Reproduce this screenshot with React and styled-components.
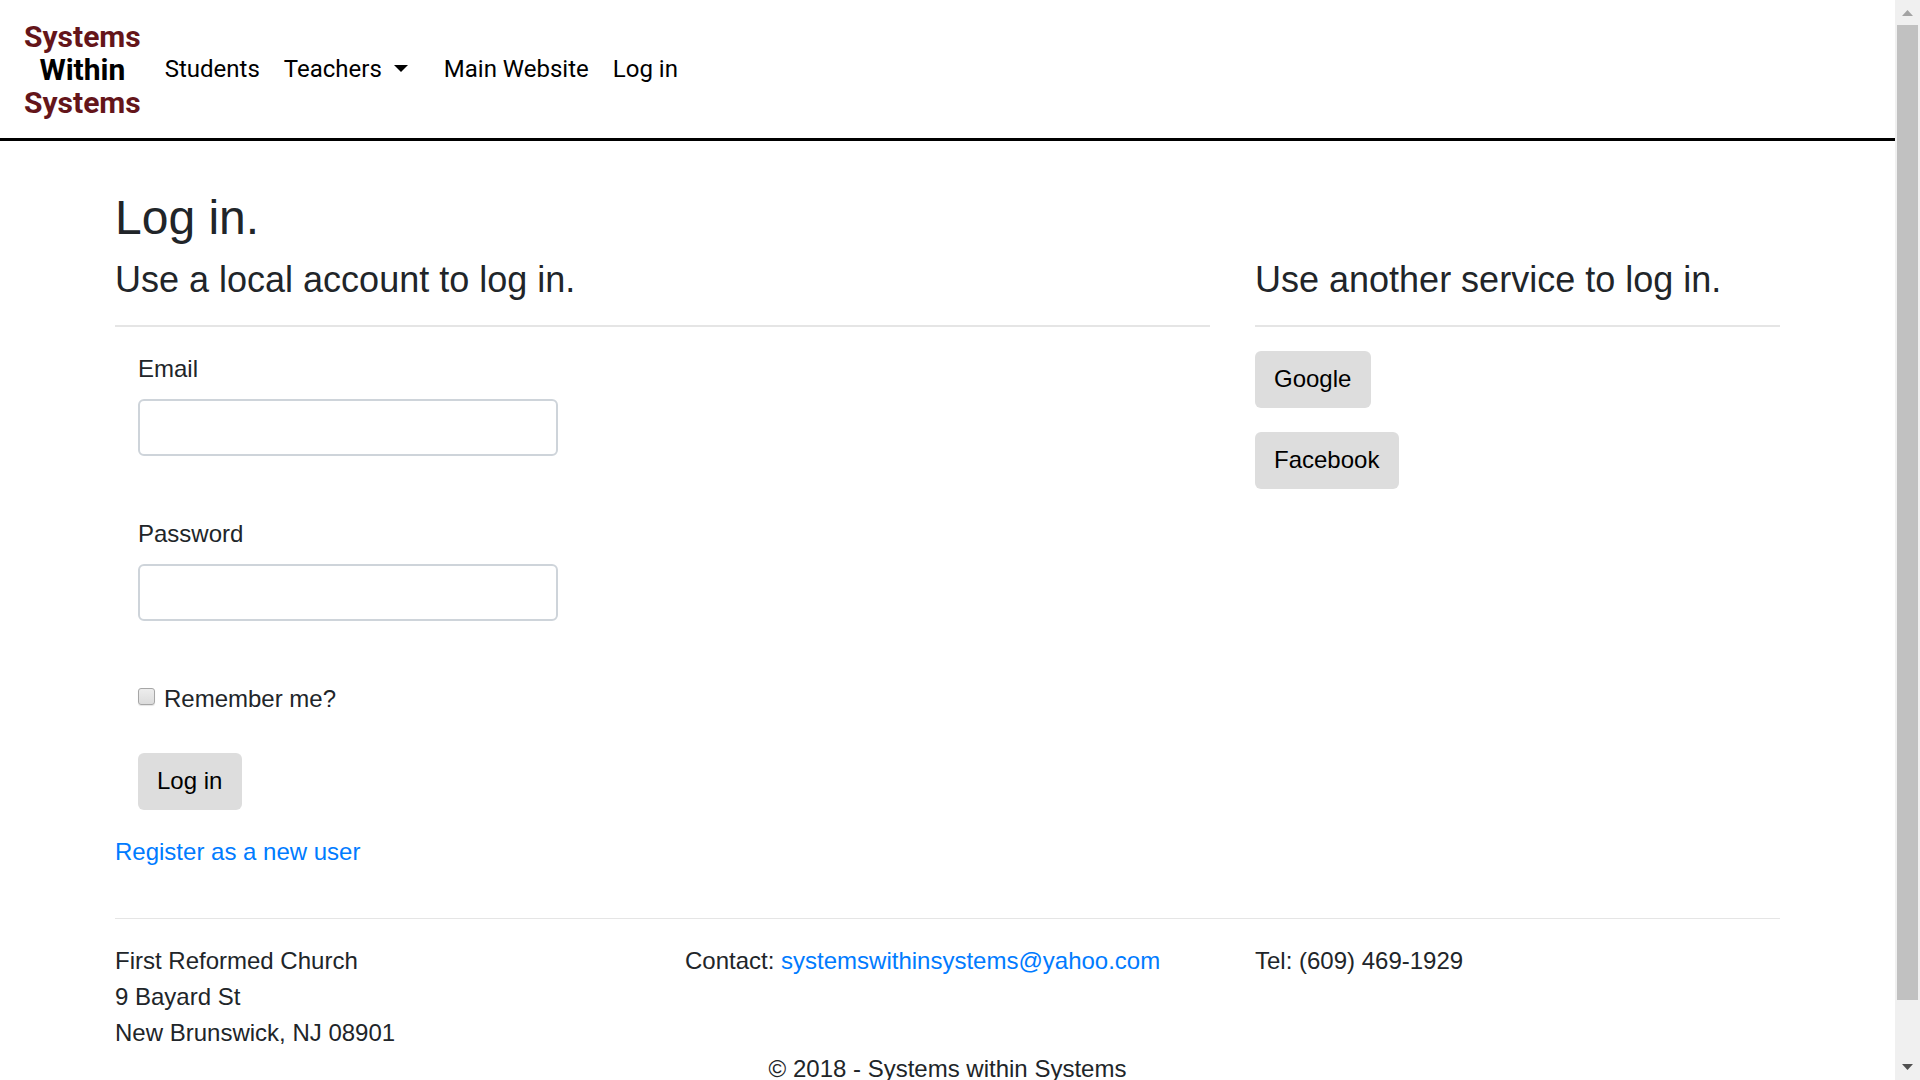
import React from "react";
import styled, { createGlobalStyle } from "styled-components";

const GlobalStyle = createGlobalStyle`
  *, *::before, *::after { box-sizing: border-box; }
  body {
    margin: 0;
    background: #fff;
    color: #212529;
    font: 24px/36px "Liberation Sans", Arial, sans-serif;
  }
`;

const Shell = styled.div`
  display: flex;
  height: 100vh;
  overflow: hidden;
`;

const Viewport = styled.div`
  flex: 1;
  min-width: 0;
  overflow-y: auto;
  scrollbar-width: none;
`;

const Navbar = styled.header`
  display: flex;
  align-items: center;
  gap: 24px;
  padding: 20px 24px 19px;
  border-bottom: 3px solid #000;
  font-family: Roboto, sans-serif;
`;

const Brand = styled.a`
  display: flex;
  flex-direction: column;
  align-items: center;
  color: #64151a;
  font-size: 30px;
  font-weight: 700;
  line-height: 33px;
  text-decoration: none;
`;

const BrandMiddle = styled.span`
  color: #000;
`;

const NavLinks = styled.nav`
  display: flex;
  gap: 24px;
  padding-bottom: 2px;
`;

const NavLink = styled.a`
  color: #000;
  text-decoration: none;
`;

const NavToggle = styled.button`
  display: flex;
  align-items: center;
  gap: 12px;
  margin-right: 12px;
  padding: 0;
  border: 0;
  background: none;
  color: #000;
  font: inherit;
`;

const Caret = styled.span`
  border: 7px solid transparent;
  border-top-color: currentColor;
  border-bottom: 0;
`;

const Container = styled.div`
  width: 100%;
  max-width: 1665px;
  margin: 0 auto;
`;

const Title = styled.h2`
  margin: 48px 0 12px;
  font-size: 48px;
  font-weight: 400;
  line-height: 57px;
`;

const Subtitle = styled.h4`
  margin: 0;
  font-size: 36px;
  font-weight: 400;
  line-height: 43px;
`;

const Divider = styled.hr`
  height: ${(p) => p.$size}px;
  margin: 24px 0;
  border: 0;
  background: #e5e5e5;
`;

const Columns = styled.div`
  display: grid;
  grid-template-columns: repeat(3, minmax(0, 1fr));
  column-gap: 45px;
`;

const LocalAccount = styled.section`
  grid-column: span 2;
`;

const Form = styled.form`
  display: flex;
  flex-direction: column;
  align-items: flex-start;
  padding-left: 23px;
`;

const Field = styled.div`
  display: flex;
  flex-direction: column;
  gap: 12px;
  width: 420px;
  max-width: 100%;
  margin-bottom: 60px;
`;

const TextInput = styled.input`
  width: 100%;
  height: 57px;
  padding: 8px 16px;
  border: 2px solid #ced4da;
  border-radius: 6px;
  background: #fff;
  color: #495057;
  font: inherit;
`;

const CheckRow = styled.div`
  display: flex;
  align-items: center;
  gap: 9px;
  margin-bottom: 36px;
`;

const Checkbox = styled.input`
  appearance: none;
  width: 17px;
  height: 17px;
  margin: 0 0 6px;
  border: 1px solid #a6a6a6;
  border-radius: 3px;
  background: linear-gradient(#ededed, #dcdcdc);
  box-shadow: 0 1px 1px rgba(0, 0, 0, 0.1);
  &:checked { background: #777; }
`;

const Button = styled.button`
  padding: 10px 20px 11px 19px;
  border: 0;
  border-radius: 6px;
  background: #ddd;
  color: #000;
  font: inherit;
`;

const Services = styled.div`
  display: flex;
  flex-direction: column;
  align-items: flex-start;
  gap: 24px;
`;

const Link = styled.a`
  color: #007bff;
  text-decoration: none;
`;

const Register = styled.p`
  margin: 24px 0;
`;

const Address = styled.address`
  font-style: normal;
`;

const Copyright = styled.div`
  text-align: center;
`;

const ScrollTrack = styled.div`
  display: flex;
  flex-direction: column;
  align-items: center;
  width: 25px;
  background: #f0f0f0;
`;

const ScrollArrow = styled.svg`
  display: block;
  flex: none;
  width: 25px;
  height: 25px;
`;

const ScrollLane = styled.div`
  flex: 1;
  width: 21px;
`;

const ScrollThumb = styled.div`
  height: calc(100% - 55px);
  background: #c1c1c1;
`;

export default function App() {
  return (
    <Shell>
      <GlobalStyle />
      <Viewport>
        <Navbar>
          <Brand href="#">
            <span>Systems</span>
            <BrandMiddle>Within</BrandMiddle>
            <span>Systems</span>
          </Brand>
          <NavLinks>
            <NavLink href="#">Students</NavLink>
            <NavToggle type="button">
              Teachers
              <Caret />
            </NavToggle>
            <NavLink href="#">Main Website</NavLink>
            <NavLink href="#">Log in</NavLink>
          </NavLinks>
        </Navbar>
        <Container>
          <main>
            <Title>Log in.</Title>
            <Columns>
              <LocalAccount>
                <Subtitle>Use a local account to log in.</Subtitle>
                <Divider $size={2} />
                <Form onSubmit={(e) => e.preventDefault()}>
                  <Field>
                    <label htmlFor="email">Email</label>
                    <TextInput id="email" type="email" />
                  </Field>
                  <Field>
                    <label htmlFor="password">Password</label>
                    <TextInput id="password" type="password" />
                  </Field>
                  <CheckRow>
                    <Checkbox id="remember" type="checkbox" />
                    <label htmlFor="remember">Remember me?</label>
                  </CheckRow>
                  <Button type="submit">Log in</Button>
                </Form>
                <Register>
                  <Link href="#">Register as a new user</Link>
                </Register>
              </LocalAccount>
              <section>
                <Subtitle>Use another service to log in.</Subtitle>
                <Divider $size={2} />
                <Services>
                  <Button type="button">Google</Button>
                  <Button type="button">Facebook</Button>
                </Services>
              </section>
            </Columns>
          </main>
          <footer>
            <Divider $size={1} />
            <Columns>
              <Address>
                First Reformed Church
                <br />
                9 Bayard St
                <br />
                New Brunswick, NJ 08901
              </Address>
              <div>
                Contact: <Link href="mailto:systemswithinsystems@yahoo.com">systemswithinsystems@yahoo.com</Link>
              </div>
              <div>Tel: (609) 469-1929</div>
            </Columns>
            <Copyright>© 2018 - Systems within Systems</Copyright>
          </footer>
        </Container>
      </Viewport>
      <ScrollTrack aria-hidden="true">
        <ScrollArrow viewBox="0 0 25 25">
          <path d="M7 16 L12.500 10 L18 16 Z" fill="#a3a3a3" />
        </ScrollArrow>
        <ScrollLane>
          <ScrollThumb />
        </ScrollLane>
        <ScrollArrow viewBox="0 0 25 25">
          <path d="M7 9 L18 9 L12.500 15 Z" fill="#505050" />
        </ScrollArrow>
      </ScrollTrack>
    </Shell>
  );
}
